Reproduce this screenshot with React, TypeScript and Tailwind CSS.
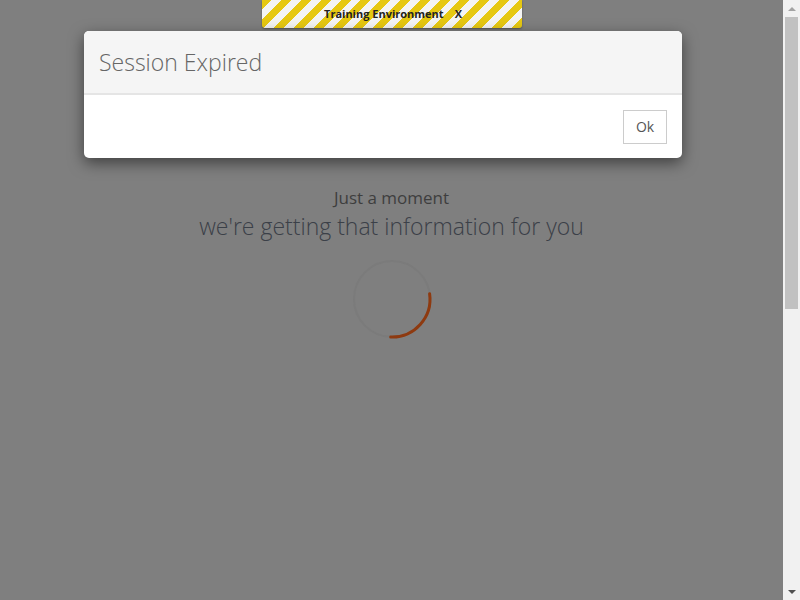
const Spinner = () => (
  <svg width="84" height="84" viewBox="0 0 84 84" className="block">
    <circle cx="42" cy="42" r="38" fill="none" stroke="#7b7b7b" strokeWidth="2" />
    <path
      d="M 79.6 36.7 A 38 38 0 0 1 40.7 80"
      fill="none"
      stroke="#8e3a10"
      strokeWidth="3"
      strokeLinecap="round"
    />
  </svg>
);

const ScrollBar = () => (
  <div className="w-[17px] h-full bg-[#f1f1f1] flex flex-col items-center">
    <div className="h-[17px] w-full flex items-center justify-center">
      <div className="w-0 h-0 border-l-[4px] border-r-[4px] border-b-[4px] border-l-transparent border-r-transparent border-b-[#a3a3a3]" />
    </div>
    <div className="w-[13px] h-[292px] bg-[#c1c1c1]" />
    <div className="flex-1" />
    <div className="h-[17px] w-full flex items-center justify-center">
      <div className="w-0 h-0 border-l-[4px] border-r-[4px] border-t-[4px] border-l-transparent border-r-transparent border-t-[#505050]" />
    </div>
  </div>
);

export default function App() {
  return (
    <div className="w-[800px] h-[600px] flex overflow-hidden font-['Open_Sans',sans-serif]">
      <div className="relative flex-1 h-full bg-[#7f7f7f] flex flex-col items-center pt-[186px]">
        <p className="text-[17px] leading-[24px] text-[#3e3e3e]">Just a moment</p>
        <p className="text-[23px] leading-[32px] font-light text-[#3b4048]">
          we're getting that information for you
        </p>
        <div className="mt-[15px] ml-[1px]">
          <Spinner />
        </div>

        {/* training banner */}
        <div className="absolute top-0 left-[262px] w-[260px] h-[28px] rounded-b-[3px] shadow-[0_1px_2px_rgba(0,0,0,0.35)] bg-[repeating-linear-gradient(135deg,#e6c812_0px,#e6c812_7px,#f4f4f4_7px,#f4f4f4_14px)] flex items-center justify-center">
          <span className="text-[11px] font-bold text-[#222] ml-[2px]">Training Environment</span>
          <span className="text-[11px] font-bold text-[#222] ml-[11px]">X</span>
        </div>

        {/* modal */}
        <div className="absolute top-[31px] left-[84px] w-[598px] bg-white rounded-[5px] shadow-[0_5px_15px_rgba(0,0,0,0.5)] overflow-hidden">
          <div className="h-[64px] bg-[#f5f5f5] border-b-[2px] border-[#e5e5e5] flex items-center px-[15px]">
            <h2 className="text-[23px] font-light text-[#666] leading-[32px]">Session Expired</h2>
          </div>
          <div className="h-[63px] flex items-center justify-end px-[15px]">
            <button className="w-[44px] h-[34px] border border-[#ccc] bg-white text-[14px] text-[#555]">
              Ok
            </button>
          </div>
        </div>
      </div>
      <ScrollBar />
    </div>
  );
}
